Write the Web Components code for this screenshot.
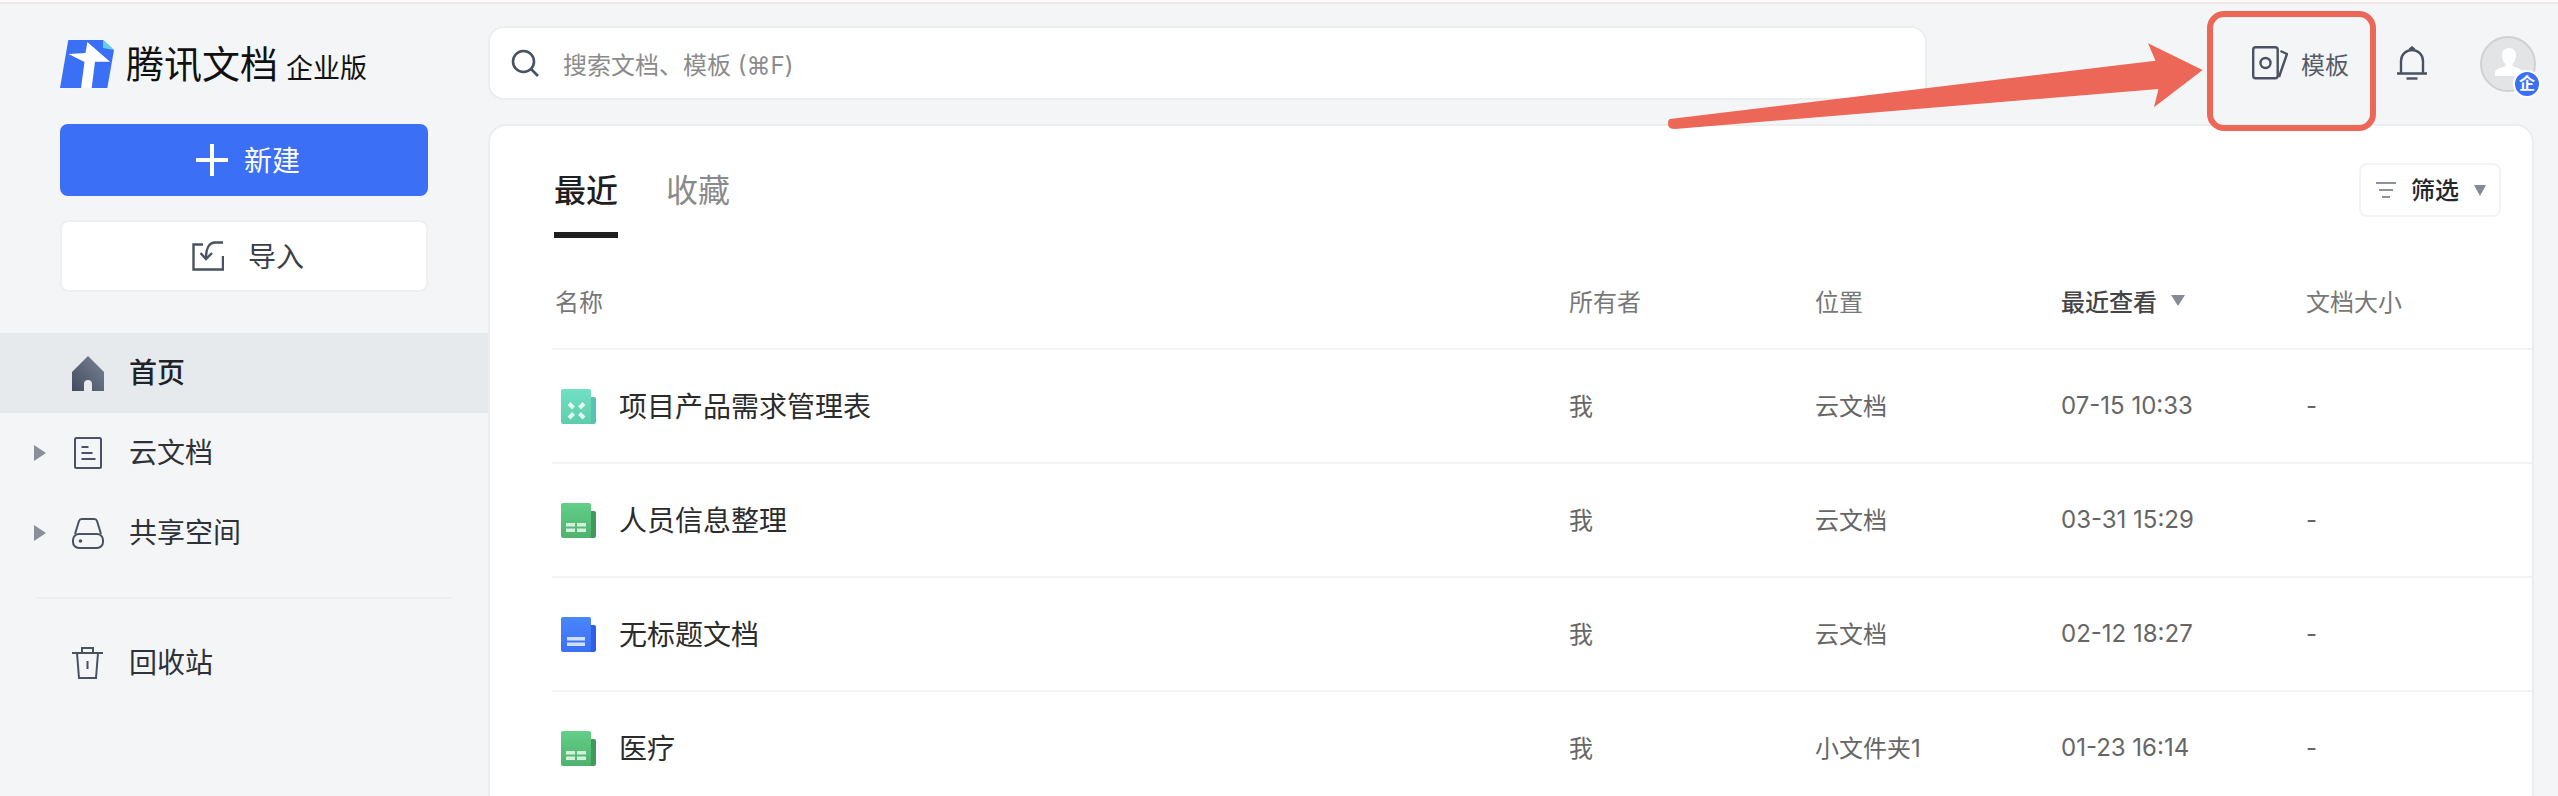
<!DOCTYPE html>
<html lang="zh">
<head>
<meta charset="utf-8">
<title>腾讯文档</title>
<style>
	html, body { margin: 0; height: 100%; overflow: hidden; background: #f4f5f7; }
	body { font-family: "Inter", "Noto Sans CJK SC", sans-serif; color: #222; }
</style>
</head>
<body>
<tdoc-app>
	<tdoc-sidebar slot="side">
		<nav-item active label="首页" icon="home"></nav-item>
		<nav-item expand label="云文档" icon="doc"></nav-item>
		<nav-item expand label="共享空间" icon="drive"></nav-item>
		<div slot="bottom"><nav-item label="回收站" icon="trash"></nav-item></div>
	</tdoc-sidebar>
	<tdoc-topbar slot="top"></tdoc-topbar>
	<doc-card slot="main">
		<doc-row kind="head"></doc-row>
		<doc-row type="flow" owner="我" place="云文档" time="07-15 10:33">项目产品需求管理表</doc-row>
		<doc-row type="sheet" owner="我" place="云文档" time="03-31 15:29">人员信息整理</doc-row>
		<doc-row type="word" owner="我" place="云文档" time="02-12 18:27">无标题文档</doc-row>
		<doc-row type="sheet" owner="我" place="小文件夹1" time="01-23 16:14">医疗</doc-row>
	</doc-card>
	<call-out slot="over"></call-out>
</tdoc-app>

<script>
(function(){
// Start of enclosed scope

const ICONS = {
	home: `<svg width="32" height="35" viewBox="0 0 32 35"><defs><linearGradient id="h" x1="1" y1="0" x2="0" y2="1"><stop offset="0" stop-color="#7a8498"/><stop offset="1" stop-color="#434c5e"/></linearGradient></defs><path fill="url(#h)" d="M16 0 32 16V35H20V28a4 4 0 0 0-8 0V35H0V16Z"/></svg>`,
	doc: `<svg width="32" height="34" viewBox="0 0 32 34" fill="none" stroke="#4a5160" stroke-width="2"><rect x="3" y="2" width="26" height="30" rx="1.5"/><path d="M9.500 11h7M9.500 17h11M9.500 23h14"/></svg>`,
	drive: `<svg width="32" height="34" viewBox="0 0 32 34" fill="none" stroke="#4a5160" stroke-width="2"><path d="M3 18 7 5a3 3 0 0 1 3-2h12a3 3 0 0 1 3 2l4 13"/><rect x="1" y="18" width="30" height="14" rx="6"/><circle cx="8.500" cy="25" r="1.800" fill="#4a5160" stroke="none"/></svg>`,
	trash: `<svg width="32" height="34" viewBox="0 0 32 34" fill="none" stroke="#4a5160" stroke-width="2"><path d="M0 7H31M5 7 7 32H24L26 7M10 7V2H21V7M15.500 15V23"/></svg>`
};

const FILES = {
	flow: {from: '#70e0c4', to: '#5fcdab', back: '#56c4b0', mark: `<path fill="none" stroke="#e4f8f2" stroke-width="4" d="M8 14.500 12.500 19M23 14.500 18.500 19M8 29 12.500 24.500M23 29 18.500 24.500"/>`},
	sheet: {from: '#62cf88', to: '#4fb26e', back: '#3f9a5c', mark: `<g fill="#d3f0dc"><rect x="5" y="20" width="9" height="3.500"/><rect x="16" y="20" width="9" height="3.500"/><rect x="5" y="25.500" width="9" height="3.500"/><rect x="16" y="25.500" width="9" height="3.500"/></g>`},
	word: {from: '#4a86fb', to: '#3b6ff5', back: '#2f5fe8', mark: `<g fill="#cfe0fe"><rect x="6" y="20" width="18" height="3.500"/><rect x="6" y="25.500" width="18" height="3.500"/></g>`}
};

class TdocApp extends HTMLElement {
	constructor(){
		super();
		this.attachShadow({mode: 'open'});
		this.shadowRoot.innerHTML = `<style>
			:host { display: block; position: relative; height: 796px; overflow: hidden; }
			.strip { height: 2px; background: #fbfbfc; border-bottom: 2px solid #f6e5e8; }
			.shell { display: flex; }
			.side { width: 488px; flex: none; }
			.main { flex: 1; min-width: 0; padding-top: 22px; }
		</style>
		<div class="strip"></div>
		<div class="shell">
			<div class="side"><slot name="side"></slot></div>
			<div class="main"><slot name="top"></slot><slot name="main"></slot></div>
		</div>
		<slot name="over"></slot>`;
	}
}

class TdocSidebar extends HTMLElement {
	constructor(){
		super();
		this.attachShadow({mode: 'open'});
		this.shadowRoot.innerHTML = `<style>
			:host { display: block; }
			.logo { display: flex; align-items: flex-end; height: 48px; margin: 36px 0 0 60px; color: #111; }
			.logo svg { flex: none; }
			.logo b { font-weight: 400; font-size: 38px; line-height: 48px; margin-left: 12px; }
			.logo i { font-style: normal; font-size: 27px; line-height: 38px; margin-left: 8px; }
			.btn { display: flex; align-items: center; justify-content: center; box-sizing: border-box;
				width: 368px; margin-left: 60px; padding-left: 8px; border-radius: 8px; font-size: 28px; }
			.btn span { margin-top: -3px; }
			.new { height: 72px; margin-top: 36px; background: #3a6ff6; color: #fff; gap: 16px; }
			.import { height: 72px; margin-top: 24px; background: #fff; border: 2px solid #eeeff1; color: #3b4048; gap: 24px; }
			.nav { margin-top: 41px; }
			hr { border: 0; height: 2px; background: #eceef0; margin: 24px 36px 24px; }
		</style>
		<div class="logo">
			<svg width="54" height="48" viewBox="0 0 54 48">
				<path fill="#3a6ff6" d="M0 48 8.300 0H43L54 10 47.300 48Z"/>
				<path fill="#5dd3ea" d="M43 0 54 10 43 8Z"/>
				<path fill="#fff" d="M8.500 14 25.500 13 27.300 2 50 21.700H35L31.700 48H21L24.500 22Z"/>
			</svg>
			<b>腾讯文档</b><i>企业版</i>
		</div>
		<div class="btn new">
			<svg width="32" height="32" viewBox="0 0 32 32"><path fill="#fff" d="M14 0h4v14h14v4H18v14h-4V18H0v-4h14Z"/></svg>
			<span>新建</span>
		</div>
		<div class="btn import">
			<svg width="32" height="30" viewBox="0 0 32 30" fill="none" stroke="#4a5160" stroke-width="2.400"><path d="M11 3.500H1.500V28.500H31V15"/><path d="M31 1.500H23C17 1.500 14 8 14 17"/><path d="M8.500 12 14 18 20 12"/></svg>
			<span>导入</span>
		</div>
		<div class="nav">
			<slot></slot>
			<hr>
			<slot name="bottom"></slot>
		</div>`;
	}
}

class NavItem extends HTMLElement {
	constructor(){
		super();
		this.attachShadow({mode: 'open'});
		const expand = this.hasAttribute('expand');
		this.shadowRoot.innerHTML = `<style>
			:host { display: flex; align-items: center; height: 80px; box-sizing: border-box; padding-left: 34px; font-size: 28px; color: #2e3238; }
			:host([active]) { background: #e7eaed; font-weight: 500; color: #1f2226; }
			.arrow { width: 0; height: 0; margin-right: 26px; border-left: 12px solid ${expand ? '#8a8f9a' : 'transparent'}; border-top: 8px solid transparent; border-bottom: 8px solid transparent; }
			.ic { display: flex; align-items: center; width: 32px; height: 35px; margin-right: 25px; }
			.tx { margin-top: -4px; }
		</style>
		<span class="arrow"></span>
		<span class="ic">${ICONS[this.getAttribute('icon')]}</span>
		<span class="tx">${this.getAttribute('label')}</span>`;
	}
}

class TdocTopbar extends HTMLElement {
	constructor(){
		super();
		this.attachShadow({mode: 'open'});
		this.shadowRoot.innerHTML = `<style>
			:host { display: flex; align-items: center; height: 74px; margin-bottom: 24px; padding-right: 22px; }
			.search { display: flex; align-items: center; box-sizing: border-box; width: 1439px; height: 74px; background: #fff;
				border: 2px solid #eceded; border-radius: 16px; padding-left: 21px; font-size: 24px; color: #8b8b8b; }
			.search svg { margin-right: 24px; }
			.acts { display: flex; align-items: center; margin-left: auto; }
			.tpl { display: flex; align-items: center; gap: 13px; font-size: 24px; color: #555c68; margin-right: 48px; }
			.bell { display: flex; margin-right: 53px; }
			.ava { position: relative; box-sizing: border-box; width: 56px; height: 56px; border-radius: 50%; background: #e3e4e6; border: 2px solid #d0d1d3; margin-top: 2px; }
			.ava svg { position: absolute; left: 13px; top: 10px; }
			.badge { position: absolute; right: -7px; bottom: -8px; box-sizing: content-box; width: 24px; height: 24px; border: 2px solid #fff; border-radius: 50%;
				background: #3a6ff6; color: #fff; font-size: 16px; font-weight: 700; line-height: 23px; text-align: center; }
		</style>
		<div class="search">
			<svg width="28" height="28" viewBox="0 0 28 28" fill="none" stroke="#4a5160" stroke-width="2.600"><circle cx="12.500" cy="12.500" r="10.500"/><path d="M20 20 27 27"/></svg>
			<span>搜索文档、模板 (⌘F)</span>
		</div>
		<div class="acts">
			<div class="tpl">
				<svg width="36" height="34" viewBox="0 0 36 34" fill="none" stroke="#4a5160" stroke-width="2.400"><rect x="1.200" y="1.200" width="24.500" height="31" rx="2.500"/><circle cx="13.500" cy="17" r="5"/><path d="M28.500 5 35 8 27 31"/></svg>
				<span>模板</span>
			</div>
			<div class="bell">
				<svg width="30" height="34" viewBox="0 0 30 34" fill="none" stroke="#4a5160" stroke-width="2.400"><path d="M0 27.500H30M4 27.500V15a11 11 0 0 1 22 0V27.500M12.500 3.500 15 1.500 17.500 3.500"/><path d="M9.500 32.500H20.500"/></svg>
			</div>
			<div class="ava">
				<svg width="28" height="30" viewBox="0 0 28 30"><path fill="#fff" d="M14 0c4.500 0 7 3.300 7 7.500 0 3.500-1.500 6.500-3.500 8.200V18c3 1.300 10 2.800 10 6.500V28H0V24.500C0 20.800 7.500 19.300 10.500 18V15.700C8.500 14 7 11 7 7.500 7 3.300 9.500 0 14 0Z"/></svg>
				<span class="badge">企</span>
			</div>
		</div>`;
	}
}

class DocCard extends HTMLElement {
	constructor(){
		super();
		this.attachShadow({mode: 'open'});
		this.shadowRoot.innerHTML = `<style>
			:host { display: block; box-sizing: border-box; height: 900px; margin-right: 24px; background: #fff; border: 2px solid #eceded; border-radius: 18px; }
			.tabs { display: flex; align-items: flex-start; height: 112px; padding-left: 64px; padding-right: 31px; gap: 48px; }
			.tab { margin-top: 43px; height: 44px; padding-bottom: 19px; font-size: 32px; line-height: 44px; color: #8a8a8a; }
			.tab.on { color: #1f1f1f; font-weight: 500; border-bottom: 6px solid #1f1f1f; }
			.filter { display: flex; align-items: center; box-sizing: border-box; margin: 37px 0 0 auto; height: 54px; width: 142px; padding-left: 15px;
				border: 2px solid #f2f3f4; border-radius: 8px; font-size: 24px; font-weight: 500; color: #24272b; }
			.filter svg { margin-right: 15px; }
			.filter span:not(.tri) { margin-top: -3px; }
			.tri { width: 0; height: 0; margin-left: 15px; border-top: 11px solid #858a94; border-left: 6.500px solid transparent; border-right: 6.500px solid transparent; }
			.rows { margin-left: 62px; }
		</style>
		<div class="tabs">
			<div class="tab on">最近</div>
			<div class="tab">收藏</div>
			<div class="filter">
				<svg width="20" height="18" viewBox="0 0 20 18" fill="none" stroke="#8d929b" stroke-width="2"><path d="M0 2H20M3 9H17M6 16H14"/></svg>
				<span>筛选</span><span class="tri"></span>
			</div>
		</div>
		<div class="rows"><slot></slot></div>`;
	}
}

class DocRow extends HTMLElement {
	constructor(){
		super();
		this.attachShadow({mode: 'open'});
		const head = this.getAttribute('kind') == 'head';
		const f = FILES[this.getAttribute('type')];
		const css = `<style>
			:host { display: grid; grid-template-columns: 1017px 246px 246px 245px 1fr; align-items: center; box-sizing: border-box; border-bottom: 2px solid #f3f3f4; font-size: 24px; color: #666; }
			:host([kind=head]) { height: 112px; padding: 15px 0 0 3px; grid-template-columns: 1014px 246px 246px 245px 1fr; color: #777; }
			:host(:not([kind=head])) { height: 114px; }
			.name { display: flex; align-items: center; padding-left: 9px; font-size: 28px; color: #2b2b2b; }
			.name svg { margin-right: 23px; flex: none; }
			.name span { margin-top: -3px; }
			.cjk { margin-top: -4px; }
			.num { margin-top: -2px; }
			.cur { display: flex; align-items: center; font-weight: 500; color: #444; gap: 14px; }
			.cur i { width: 0; height: 0; border-top: 11px solid #858a94; border-left: 7.500px solid transparent; border-right: 7.500px solid transparent; }
		</style>`;
		if(head){
			this.shadowRoot.innerHTML = css + `<span>名称</span><span>所有者</span><span>位置</span>
				<span class="cur">最近查看<i></i></span><span>文档大小</span>`;
			return;
		}
		const id = 'g' + this.getAttribute('type') + (DocRow.next = (DocRow.next || 0) + 1);
		this.shadowRoot.innerHTML = css + `<div class="name">
			<svg width="35" height="35" viewBox="0 0 35 35">
				<defs><linearGradient id="${id}" x1="0" y1="0" x2="0" y2="1"><stop offset="0" stop-color="${f.from}"/><stop offset="1" stop-color="${f.to}"/></linearGradient></defs>
				<path fill="${f.back}" d="M28 8h5a2 2 0 0 1 2 2v23a2 2 0 0 1-2 2H28Z"/>
				<rect width="30" height="35" rx="2" fill="url(#${id})"/>${f.mark}
			</svg><span><slot></slot></span></div>
			<span class="cjk">${this.getAttribute('owner')}</span>
			<span class="cjk">${this.getAttribute('place')}</span>
			<span class="num">${this.getAttribute('time')}</span>
			<span class="num">-</span>`;
	}
}

// Red markup drawn over the screenshot, so it sits on its own layer
class CallOut extends HTMLElement {
	constructor(){
		super();
		this.attachShadow({mode: 'open'});
		this.shadowRoot.innerHTML = `<style>
			:host { position: absolute; inset: 0; pointer-events: none; }
			svg { position: absolute; left: 0; top: 0; }
		</style>
		<svg width="2558" height="796" viewBox="0 0 2558 796">
			<rect x="2210" y="14" width="163" height="114" rx="14" fill="none" stroke="#ec6757" stroke-width="6"/>
			<path fill="#ec6757" d="M1670 119 2155.500 60.700 2148 43.300 2202.600 70 2154 107.300 2158.500 89 1675 129 Q1668 129 1668 124 1668 119.500 1670 119Z"/>
		</svg>`;
	}
}

customElements.define('tdoc-app', TdocApp);
customElements.define('tdoc-sidebar', TdocSidebar);
customElements.define('nav-item', NavItem);
customElements.define('tdoc-topbar', TdocTopbar);
customElements.define('doc-card', DocCard);
customElements.define('doc-row', DocRow);
customElements.define('call-out', CallOut);

// End of enclosed scope
})();
</script>
</body>
</html>
